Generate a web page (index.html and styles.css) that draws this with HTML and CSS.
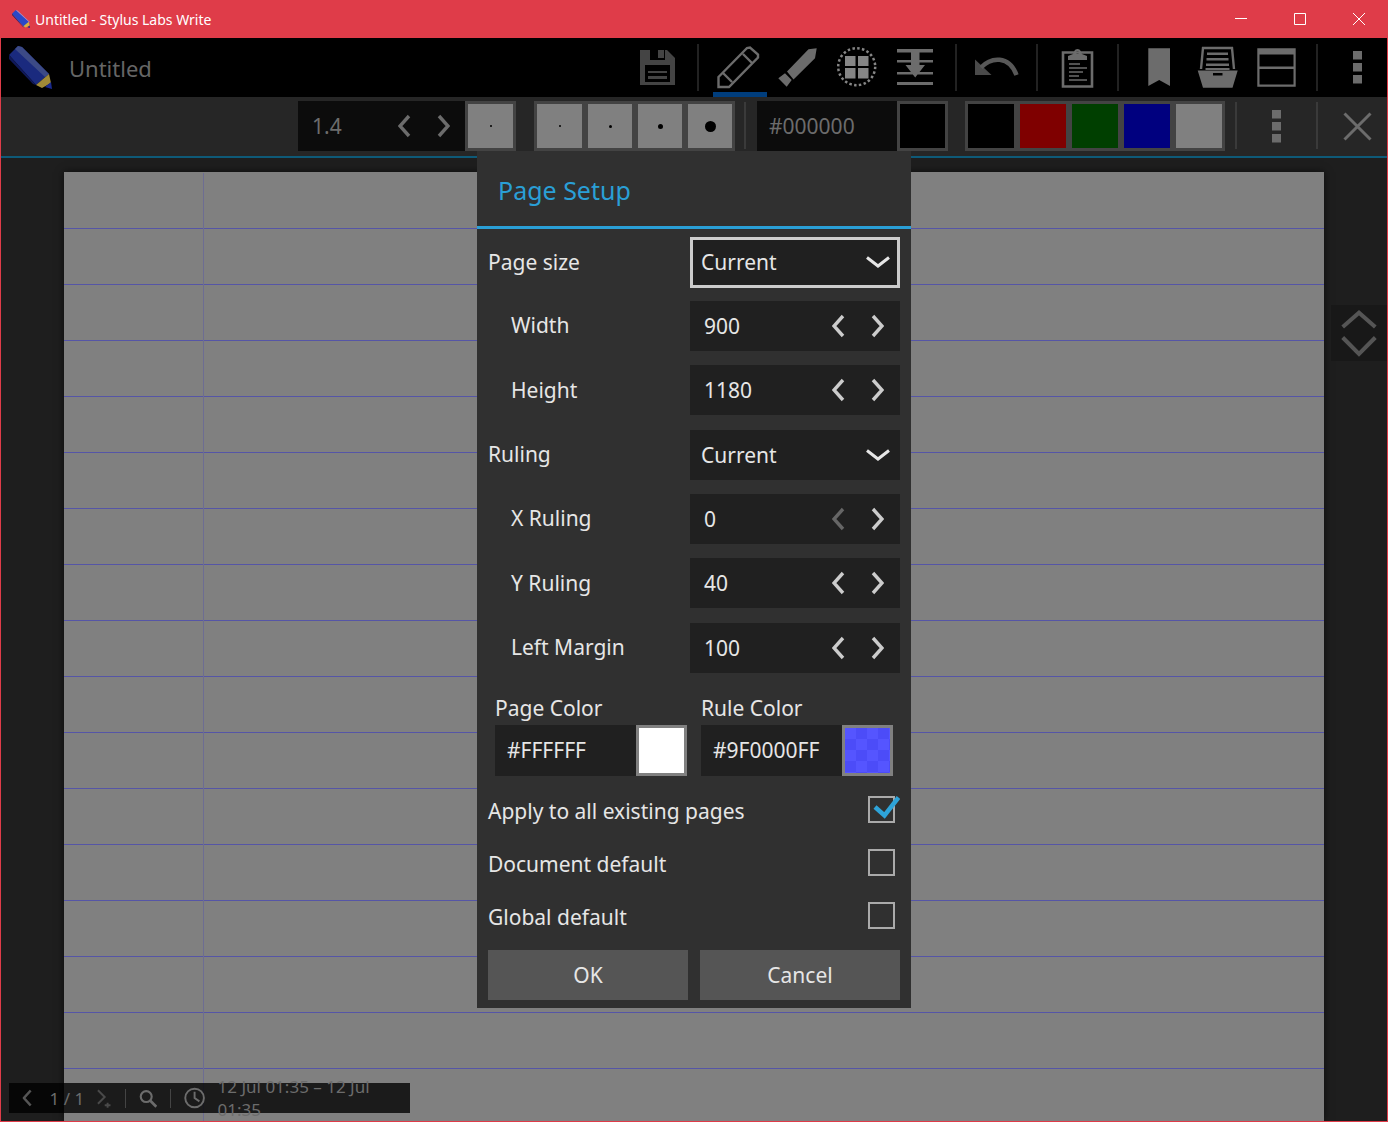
FILE: index.html
```html
<!DOCTYPE html>
<html lang="en">
<head>
    <meta charset="UTF-8">
    <title>Untitled - Stylus Labs Write</title>
    <link rel="stylesheet" href="styles.css">
</head>
<body>
    <svg class="defs" width="0" height="0">
        <symbol id="chev-left" viewBox="0 0 13 24"><path d="M11 2 2 12l9 10" fill="none" stroke="currentColor" stroke-width="3.4"/></symbol>
        <symbol id="chev-right" viewBox="0 0 13 24"><path d="M2 2l9 10-9 10" fill="none" stroke="currentColor" stroke-width="3.4"/></symbol>
        <symbol id="chev-down" viewBox="0 0 24 12"><path d="M1 1.5 12 10 23 1.5" fill="none" stroke="currentColor" stroke-width="3"/></symbol>
        <symbol id="kebab" viewBox="0 0 9 33"><path d="M0 0h9v8.500H0zM0 12h9v8.500H0zM0 24h9v8.500H0z" fill="currentColor"/></symbol>
    </svg>

    <div class="window">
        <!-- title bar -->
        <header class="titlebar">
            <svg class="title-icon" width="18" height="18" viewBox="0 0 43 43">
                <path d="M0 9 9 0l33 30-13 11z" fill="#2a48c8"/>
                <path d="M9 0l4 1 29 27v2z" fill="#8fa0ea"/>
                <path d="M0 9l28 32-1 0L0 12z" fill="#14206a"/>
                <path d="M27 39 40 28l2 9-9 5z" fill="#d8b040"/>
                <path d="M37 41l6 2-1-6z" fill="#1a2a90"/>
            </svg>
            <span class="title-text">Untitled - Stylus Labs Write</span>
            <div class="win-buttons">
                <button class="win-btn"><svg width="14" height="14" viewBox="0 0 14 14"><path d="M1 6.500h12" stroke="#fff" fill="none"/></svg></button>
                <button class="win-btn"><svg width="14" height="14" viewBox="0 0 14 14"><path d="M1.500 1.500h11v11h-11z" stroke="#fff" fill="none"/></svg></button>
                <button class="win-btn"><svg width="14" height="14" viewBox="0 0 14 14"><path d="M1 1l12 12M13 1 1 13" stroke="#fff" fill="none"/></svg></button>
            </div>
        </header>

        <!-- main toolbar -->
        <div class="toolbar">
            <svg class="logo" width="43" height="43" viewBox="0 0 43 43">
                <path d="M0 9 9 0l4 1 27 27-13 11z" fill="#1a2a7e"/>
                <path d="M9 0l4 1 27 27-4 3L6 3z" fill="#3c4a86"/>
                <path d="M0 9l27 30-3-1L0 13z" fill="#10195a"/>
                <path d="M27 39 40 28l2 9-9 5z" fill="#a08a38"/>
                <path d="M36 41l7 2-1-7z" fill="#1a2a8e"/>
            </svg>
            <span class="doc-name">Untitled</span>
            <div class="tools">
                <button class="tool tool-dim">
                    <svg width="59" height="59" viewBox="0 0 59 59">
                        <path fill-rule="evenodd" d="M12 12H39L47 20V47H12zM22 12V22H37V12zM17 27V44H42V27z" fill="#444"/>
                        <path d="M30 12h6v8h-6zM20 33h19v2H20zM20 38h19v3H20z" fill="#444"/>
                    </svg>
                </button>
                <span class="sep"></span>
                <button class="tool tool-active">
                    <svg width="59" height="59" viewBox="0 0 59 59">
                        <path d="M9.500 39 38 10l3-.500 8 7v3L20 49H9.500zM34 16l9 9M14 35l9 9" fill="none" stroke="#6c6c6c" stroke-width="2.400"/>
                    </svg>
                </button>
                <button class="tool">
                    <svg width="59" height="59" viewBox="0 0 59 59">
                        <path d="M19 33.500 40.500 11.300 48.700 10.300 47 20.300 25.500 41.500zM10.300 40.300l6.700-5 6.700 6.700-5 6.700z" fill="#6c6c6c"/>
                    </svg>
                </button>
                <button class="tool">
                    <svg width="59" height="59" viewBox="0 0 59 59">
                        <circle cx="29.700" cy="28.700" r="18.500" fill="none" stroke="#858585" stroke-width="2.500" stroke-dasharray="2.500 2.340"/>
                        <path d="M18 18h10.500v10H18zM31 18h10.500v10H31zM18 30h10.500v10.500H18zM31 30h10.500v10.500H31z" fill="#858585"/>
                    </svg>
                </button>
                <button class="tool">
                    <svg width="59" height="59" viewBox="0 0 59 59">
                        <path d="M11 11h36v3.500H11zM11 22h36v2.500H11zM11 34h36v2.500H11zM11 44h36v3H11zM25 14h8.500v13H39L29.200 39.500 19.500 27H25z" fill="#6c6c6c"/>
                        <path d="M25 24.500h-3M36 24.500h-2.500" stroke="#000" stroke-width="0"/>
                    </svg>
                </button>
                <span class="sep"></span>
                <button class="tool">
                    <svg width="59" height="59" viewBox="0 0 59 59">
                        <path d="M8 21.500V37h16.500z" fill="#4a4a4a"/>
                        <path d="M14 29.500C24 19 42 17 49.500 37" fill="none" stroke="#585858" stroke-width="4.500"/>
                    </svg>
                </button>
                <span class="sep"></span>
                <button class="tool">
                    <svg width="59" height="59" viewBox="0 0 59 59">
                        <path d="M15 14.500h29v34H15z" fill="none" stroke="#6c6c6c" stroke-width="2.600"/>
                        <path fill-rule="evenodd" d="M20 22v-4l5-2c1-2 1.500-5 4.500-5s3.500 3 4.500 5l5 2v4zM29.500 13a1.500 1.500 0 1 0 .01 0z" fill="#6c6c6c"/>
                        <path d="M21 26h11M21 30h18M21 34h14M21 38h10M21 42h18" stroke="#6c6c6c" stroke-width="1.400"/>
                    </svg>
                </button>
                <span class="sep"></span>
                <button class="tool">
                    <svg width="59" height="59" viewBox="0 0 59 59">
                        <path d="M19.300 10.300H41V48l-10.800-6L19.300 48z" fill="#6c6c6c"/>
                    </svg>
                </button>
                <button class="tool">
                    <svg width="59" height="59" viewBox="0 0 59 59">
                        <path d="M13 31 15 10h29l2 21" fill="none" stroke="#6c6c6c" stroke-width="2.400"/>
                        <path d="M19 14.500h21v2.500H19zM18.500 20h22v2.500h-22zM18 25.500h23V28H18zM17.500 30h24v2h-24z" fill="#6c6c6c"/>
                        <path fill-rule="evenodd" d="M9.700 32.500h40L44.500 49.700H15zM25 35v2.500h9.500V35z" fill="#6c6c6c"/>
                    </svg>
                </button>
                <button class="tool">
                    <svg width="59" height="59" viewBox="0 0 59 59">
                        <path fill-rule="evenodd" d="M10.300 10.300h38.400v38.400H10.300zM12.500 16.500v12h34v-12zM12.500 31v15.500h34V31z" fill="#6c6c6c"/>
                    </svg>
                </button>
                <span class="sep"></span>
                <button class="tool tool-kebab"><svg width="9" height="33"><use href="#kebab"/></svg></button>
            </div>
        </div>

        <!-- pen options bar -->
        <div class="penbar">
            <div class="field field-dark field-small">
                <span class="field-val">1.4</span>
                <svg class="chev" width="13" height="24"><use href="#chev-left"/></svg>
                <svg class="chev" width="13" height="24"><use href="#chev-right"/></svg>
            </div>
            <div class="cell"><i class="dot dot-1"></i></div>
            <div class="cell-group group-widths">
                <div class="cell"><i class="dot dot-1"></i></div>
                <div class="cell"><i class="dot dot-2"></i></div>
                <div class="cell"><i class="dot dot-3"></i></div>
                <div class="cell"><i class="dot dot-4"></i></div>
            </div>
            <span class="sep sep-pen"></span>
            <div class="field field-dark field-color"><span class="field-val">#000000</span></div>
            <div class="cell cell-black"></div>
            <div class="cell-group group-colors">
                <div class="cell cell-black"></div>
                <div class="cell cell-red"></div>
                <div class="cell cell-green"></div>
                <div class="cell cell-blue"></div>
                <div class="cell cell-plain"></div>
            </div>
            <span class="sep"></span>
            <button class="tool tool-short tool-kebab"><svg width="9" height="33"><use href="#kebab"/></svg></button>
            <span class="sep"></span>
            <button class="tool tool-short">
                <svg width="59" height="50" viewBox="0 0 59 50">
                    <path d="M16.500 12.500l26 26M42.500 12.500l-26 26" stroke="#6c6c6c" stroke-width="3" fill="none"/>
                </svg>
            </button>
        </div>
        <div class="accent-line"></div>

        <!-- document view -->
        <main class="view">
            <div class="page"></div>
        </main>

        <div class="side-scroll">
            <svg width="56" height="56" viewBox="0 0 56 56">
                <path d="M11.700 22 28 7.700 44.300 22M11.700 32.500 28 49 44.300 32.500" fill="none" stroke="#555" stroke-width="4"/>
            </svg>
        </div>

        <div class="statusbar">
            <svg class="chev-status" width="11" height="18" viewBox="0 0 13 24"><use href="#chev-left"/></svg>
            <span class="page-num">1 / 1</span>
            <svg class="next-page" width="16" height="20" viewBox="0 0 16 20">
                <path d="M1 2l7 7-7 7M11 15v5M8 17.500h6" fill="none" stroke="#4a4a4a" stroke-width="2"/>
            </svg>
            <span class="status-sep"></span>
            <svg class="search" width="19" height="19" viewBox="0 0 19 19">
                <circle cx="7.500" cy="7.500" r="5.700" fill="none" stroke="#6c6c6c" stroke-width="2.200"/>
                <path d="M11.800 11.800 18 18" stroke="#6c6c6c" stroke-width="2.800"/>
            </svg>
            <span class="status-sep"></span>
            <svg class="clock" width="22" height="22" viewBox="0 0 22 22">
                <circle cx="11" cy="11" r="9.700" fill="none" stroke="#6c6c6c" stroke-width="2"/>
                <path d="M11 4.500V11l5 3.500" fill="none" stroke="#6c6c6c" stroke-width="2"/>
            </svg>
            <span class="status-text">12 Jul 01:35 – 12 Jul 01:35</span>
        </div>

        <!-- page setup dialog -->
        <section class="dialog">
            <h2 class="dialog-title">Page Setup</h2>
            <div class="rows">
                <div class="row">
                    <label class="row-label">Page size</label>
                    <div class="field field-select field-focus">
                        <span class="field-val">Current</span>
                        <svg class="chev-select" width="24" height="12"><use href="#chev-down"/></svg>
                    </div>
                </div>
                <div class="row">
                    <label class="row-label indent">Width</label>
                    <div class="field">
                        <span class="field-val">900</span>
                        <svg class="chev" width="13" height="24"><use href="#chev-left"/></svg>
                        <svg class="chev" width="13" height="24"><use href="#chev-right"/></svg>
                    </div>
                </div>
                <div class="row">
                    <label class="row-label indent">Height</label>
                    <div class="field">
                        <span class="field-val">1180</span>
                        <svg class="chev" width="13" height="24"><use href="#chev-left"/></svg>
                        <svg class="chev" width="13" height="24"><use href="#chev-right"/></svg>
                    </div>
                </div>
                <div class="row">
                    <label class="row-label">Ruling</label>
                    <div class="field field-select">
                        <span class="field-val">Current</span>
                        <svg class="chev-select" width="24" height="12"><use href="#chev-down"/></svg>
                    </div>
                </div>
                <div class="row">
                    <label class="row-label indent">X Ruling</label>
                    <div class="field">
                        <span class="field-val">0</span>
                        <svg class="chev chev-off" width="13" height="24"><use href="#chev-left"/></svg>
                        <svg class="chev" width="13" height="24"><use href="#chev-right"/></svg>
                    </div>
                </div>
                <div class="row">
                    <label class="row-label indent">Y Ruling</label>
                    <div class="field">
                        <span class="field-val">40</span>
                        <svg class="chev" width="13" height="24"><use href="#chev-left"/></svg>
                        <svg class="chev" width="13" height="24"><use href="#chev-right"/></svg>
                    </div>
                </div>
                <div class="row">
                    <label class="row-label indent">Left Margin</label>
                    <div class="field">
                        <span class="field-val">100</span>
                        <svg class="chev" width="13" height="24"><use href="#chev-left"/></svg>
                        <svg class="chev" width="13" height="24"><use href="#chev-right"/></svg>
                    </div>
                </div>
            </div>

            <div class="color-pickers">
                <div class="picker">
                    <div class="picker-label">Page Color</div>
                    <div class="picker-body">
                        <span class="picker-val">#FFFFFF</span>
                        <span class="swatch swatch-white"></span>
                    </div>
                </div>
                <div class="picker picker-rule">
                    <div class="picker-label">Rule Color</div>
                    <div class="picker-body">
                        <span class="picker-val">#9F0000FF</span>
                        <span class="swatch swatch-rule"></span>
                    </div>
                </div>
            </div>

            <div class="checks">
                <div class="check-row">
                    <span>Apply to all existing pages</span>
                    <span class="checkbox">
                        <svg class="tick" width="30" height="24" viewBox="0 0 30 24"><path d="M5 12l9.500 8.500L28.500 2.500" fill="none" stroke="#2ea3d8" stroke-width="4.500"/></svg>
                    </span>
                </div>
                <div class="check-row">
                    <span>Document default</span>
                    <span class="checkbox"></span>
                </div>
                <div class="check-row">
                    <span>Global default</span>
                    <span class="checkbox"></span>
                </div>
            </div>

            <div class="dialog-buttons">
                <button class="dlg-btn">OK</button>
                <button class="dlg-btn">Cancel</button>
            </div>
        </section>
    </div>
</body>
</html>
```

FILE: styles.css
```css
* {
    box-sizing: border-box;
}

html, body {
    margin: 0;
    padding: 0;
    height: 100%;
}

body {
    font-family: "Noto Sans", "Open Sans", sans-serif;
    background-color: #1e1e1e;
    overflow: hidden;
}

.defs {
    position: absolute;
}

button {
    font-family: inherit;
    border: none;
    padding: 0;
    background: none;
}

.window {
    position: relative;
    height: 1122px;
    display: flex;
    flex-direction: column;
    border: 1px solid #df3c49;
    border-top: 0;
    background-color: #1e1e1e;
    overflow: hidden;
}

/* title bar */
.titlebar {
    height: 38px;
    flex: none;
    display: flex;
    align-items: center;
    background-color: #df3c49;
    color: #fff;
    margin: 0 -1px;
}

.title-icon {
    margin-left: 12px;
    margin-top: -1px;
}

.title-text {
    margin-left: 5px;
    font-size: 14px;
}

.win-buttons {
    margin-left: auto;
    display: flex;
}

.win-btn {
    width: 59px;
    height: 38px;
    display: flex;
    align-items: center;
    justify-content: center;
}

/* main toolbar */
.toolbar {
    height: 59px;
    flex: none;
    display: flex;
    align-items: center;
    background-color: #000;
}

.logo {
    margin-left: 8px;
}

.doc-name {
    margin-left: 17px;
    font-size: 22px;
    color: #666;
}

.tools {
    margin-left: auto;
    display: flex;
    align-items: center;
}

.tool {
    width: 59px;
    height: 59px;
    flex: none;
    display: flex;
    align-items: center;
    justify-content: center;
    color: #6c6c6c;
}

.tool-short {
    height: 50px;
}

.tool-active {
    position: relative;
}

.tool-active::after {
    content: "";
    position: absolute;
    left: 4px;
    right: 1px;
    bottom: 0;
    height: 5px;
    background-color: #003d7c;
}

.sep {
    width: 2px;
    height: 47px;
    margin: 0 10px;
    flex: none;
    background-color: #222;
}

/* pen bar */
.penbar {
    height: 59px;
    flex: none;
    display: flex;
    align-items: flex-start;
    padding-top: 4px;
    background-color: #262626;
}

.penbar .sep {
    background-color: #3a3a3a;
    margin-top: 1px;
}

.sep-pen {
    margin: 1px 11px 0 9px !important;
}

.accent-line {
    height: 2px;
    flex: none;
    background-color: #0e5a78;
}

.field {
    height: 50px;
    display: flex;
    align-items: center;
    padding-right: 16px;
    background-color: #202020;
    font-size: 21px;
    color: #e6e6e6;
}

.field-val {
    padding-left: 14px;
    margin-right: auto;
}

.field-dark {
    background-color: #0c0c0c;
    color: #6c6c6c;
}

.field-small {
    width: 167px;
    margin-left: 297px;
    padding-right: 15px;
}

.field-color {
    width: 140px;
    padding-right: 0;
}

.field-color .field-val {
    padding-left: 12px;
}

.chev {
    color: #cccccc;
    flex: none;
}

.chev + .chev {
    margin-left: 26px;
}

.field-dark .chev {
    color: #6c6c6c;
}

.chev-off {
    color: #666;
}

.field-select {
    padding-right: 10px;
}

.field-select .field-val {
    padding-left: 11px;
}

.field-focus {
    height: 51px;
    border: 3px solid #cccccc;
    padding-right: 7px;
}

.field-focus .field-val {
    padding-left: 8px;
}

.cell-group {
    display: flex;
    height: 50px;
}

.group-widths {
    margin-left: 18px;
}

.group-colors {
    margin-left: 17px;
}

.cell {
    width: 51px;
    height: 50px;
    flex: none;
    display: flex;
    align-items: center;
    justify-content: center;
    border: 3px solid #434343;
    background-color: #808080;
}

.group-widths .cell {
    width: 50px;
}

.group-widths .cell:first-child {
    width: 51px;
}

.group-colors .cell {
    width: 52px;
}

.cell-black {
    background-color: #000;
}

.cell-red {
    background-color: #7f0000;
}

.cell-green {
    background-color: #003f00;
}

.cell-blue {
    background-color: #00007f;
}

.cell-plain {
    background-color: #808080;
}

.dot {
    display: block;
    border-radius: 50%;
    background-color: #000;
}

.dot-1 {
    width: 2px;
    height: 2px;
}

.dot-2 {
    width: 3px;
    height: 3px;
}

.dot-3 {
    width: 5px;
    height: 5px;
}

.dot-4 {
    width: 11px;
    height: 11px;
}

/* document view */
.view {
    flex: 1;
    min-height: 0;
    padding: 14px 63px 0;
}

.page {
    height: 100%;
    border-top: 1px solid #808080;
    background-color: #808080;
    background-image:
        linear-gradient(#6d6d92, #6d6d92),
        linear-gradient(to bottom, transparent 55px, #5555a6 55px);
    background-size: 1px 100%, 100% 56px;
    background-position: 139px 0, 0 0;
    background-repeat: no-repeat, repeat-y;
    box-shadow: 0 0 8px rgba(0, 0, 0, 0.6);
}

.side-scroll {
    position: absolute;
    left: 1330px;
    top: 305px;
    width: 56px;
    height: 56px;
    background-color: #181818;
}

.side-scroll svg {
    display: block;
}

.statusbar {
    position: absolute;
    left: 8px;
    top: 1083px;
    width: 401px;
    height: 30px;
    display: flex;
    align-items: center;
    background-color: rgba(0, 0, 0, 0.79);
    color: #6c6c6c;
    font-size: 17px;
}

.chev-status {
    margin-left: 13px;
    color: #555;
}

.page-num {
    margin-left: 17px;
    width: 49px;
}

.status-sep {
    width: 1px;
    height: 19px;
    margin: 0 13px;
    background-color: #444;
}

.status-text {
    margin-left: 12px;
}

/* dialog */
.dialog {
    position: absolute;
    left: 476px;
    top: 151px;
    width: 434px;
    height: 857px;
    background-color: #303030;
    color: #e6e6e6;
}

.dialog-title {
    height: 78px;
    margin: 0;
    padding: 22px 0 0 21px;
    border-bottom: 3px solid #2a9fd6;
    font-size: 25px;
    line-height: 34px;
    font-weight: 400;
    color: #2a9fd6;
}

.rows {
    display: flex;
    flex-direction: column;
    gap: 14.35px;
    padding: 7.500px 11px 0;
}

.row {
    display: grid;
    grid-template-columns: 202px 210px;
    height: 50px;
    align-items: center;
    font-size: 21px;
}

.indent {
    padding-left: 23px;
}

.row-label {
    margin-top: -1px;
}

.color-pickers {
    display: flex;
    margin-top: 18px;
    padding-left: 18px;
    gap: 14px;
}

.picker {
    width: 192px;
    font-size: 21px;
}

.picker-label {
    height: 34px;
    line-height: 34px;
}

.picker-body {
    display: flex;
    height: 51px;
    background-color: #202020;
    align-items: center;
}

.picker-val {
    padding-left: 12px;
    margin-right: auto;
}

.swatch {
    width: 51px;
    height: 51px;
    border: 3px solid #808080;
}

.swatch-white {
    background-color: #fff;
}

.swatch-rule {
    background-color: #5555ff;
    background-image:
        linear-gradient(45deg, #4c4cf8 25%, transparent 25% 75%, #4c4cf8 75%),
        linear-gradient(45deg, #4c4cf8 25%, transparent 25% 75%, #4c4cf8 75%);
    background-size: 22px 22px;
    background-position: 0 0, 11px 11px;
}

.checks {
    margin-top: 9px;
    padding: 0 16px 0 11px;
    font-size: 21px;
}

.check-row {
    height: 53px;
    display: flex;
    align-items: center;
    justify-content: space-between;
}

.checkbox {
    position: relative;
    width: 27px;
    height: 27px;
    border: 2px solid #aaa;
    margin-top: -3px;
}

.tick {
    position: absolute;
    left: 0;
    top: -3px;
}

.dialog-buttons {
    display: flex;
    gap: 12px;
    padding: 6px 11px 0;
}

.dlg-btn {
    width: 200px;
    height: 50px;
    background-color: #555;
    color: #e6e6e6;
    font-size: 21px;
}
```
